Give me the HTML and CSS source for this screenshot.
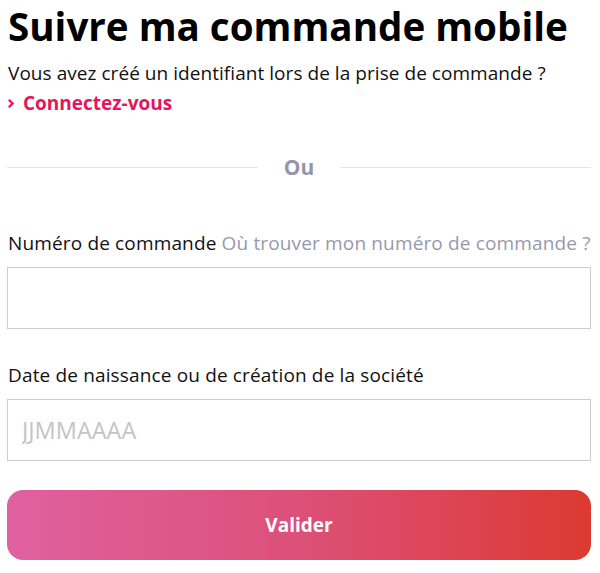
FILE: index.html
```html
<!doctype html>
<html>
<head>
<meta charset="utf-8">
<title>Suivre ma commande mobile</title>
<link rel="stylesheet" href="styles.css">
</head>
<body>
<div class="page">
	<h1 class="title">Suivre ma commande mobile</h1>
	<p class="intro">Vous avez créé un identifiant lors de la prise de commande ?</p>
	<a class="login" href="#">
		<svg class="chev" width="8" height="11" viewBox="0 0 8 11"><path d="M1.8 1.8 L5.6 5.5 L1.8 9.2" fill="none" stroke="#e6145a" stroke-width="2.2"/></svg>
		Connectez-vous
	</a>
	<div class="sep"><span>Ou</span></div>
	<label class="field_label">Numéro de commande <a href="#" class="help">Où trouver mon numéro de commande ?</a></label>
	<input class="field" type="text">
	<label class="field_label">Date de naissance ou de création de la société</label>
	<input class="field" type="text" placeholder="JJMMAAAA">
	<button class="submit">Valider</button>
</div>
</body>
</html>
```

FILE: styles.css
```css
body {margin: 0; padding: 0; background: #fff; font-family: "Open Sans", "Liberation Sans", sans-serif; color: #111;}
.page {width: 584px; margin-left: 7px; display: flex; flex-direction: column;}
.title {margin: 0; padding-left: 1px; font-size: 38.6px; line-height: 53px; font-weight: 700; color: #000; white-space: nowrap;}
.intro {margin: 7px 0 0 1px; font-size: 19px; line-height: 26px; white-space: nowrap; letter-spacing: 0.05px;}
.login {margin-top: 4px; display: flex; align-items: center; gap: 8px; font-size: 19px; line-height: 26px; font-weight: 700; color: #e6145a; text-decoration: none;}
.sep {margin-top: 36px; display: flex; align-items: center; gap: 26px; color: #9496a8; font-size: 21px; font-weight: 700; line-height: 30px;}
.sep::before, .sep::after {content: ""; flex: 1; height: 1px; background: #e6e6e6;}
.field_label {margin-top: 48px; padding-left: 1px; font-size: 19px; line-height: 26px; color: #111; white-space: nowrap; letter-spacing: 0.15px;}
.field_label + .field {margin-top: 11px;}
.help {color: #9799ad; text-decoration: none;}
.field {box-sizing: border-box; height: 62px; border: 1px solid #cfcfcf; border-radius: 0; padding: 0 14px; font: 23.5px "Open Sans", "Liberation Sans", sans-serif; color: #111;}
.field::placeholder {color: #c4c4c4;}
.field + .field_label {margin-top: 33px;}
.submit {margin-top: 29px; height: 70px; border: 0; border-radius: 16px; background: linear-gradient(to right, #df619f, #dc5079 50%, #dc3a31); color: #fff; font: 700 19px "Open Sans", "Liberation Sans", sans-serif;}
```
